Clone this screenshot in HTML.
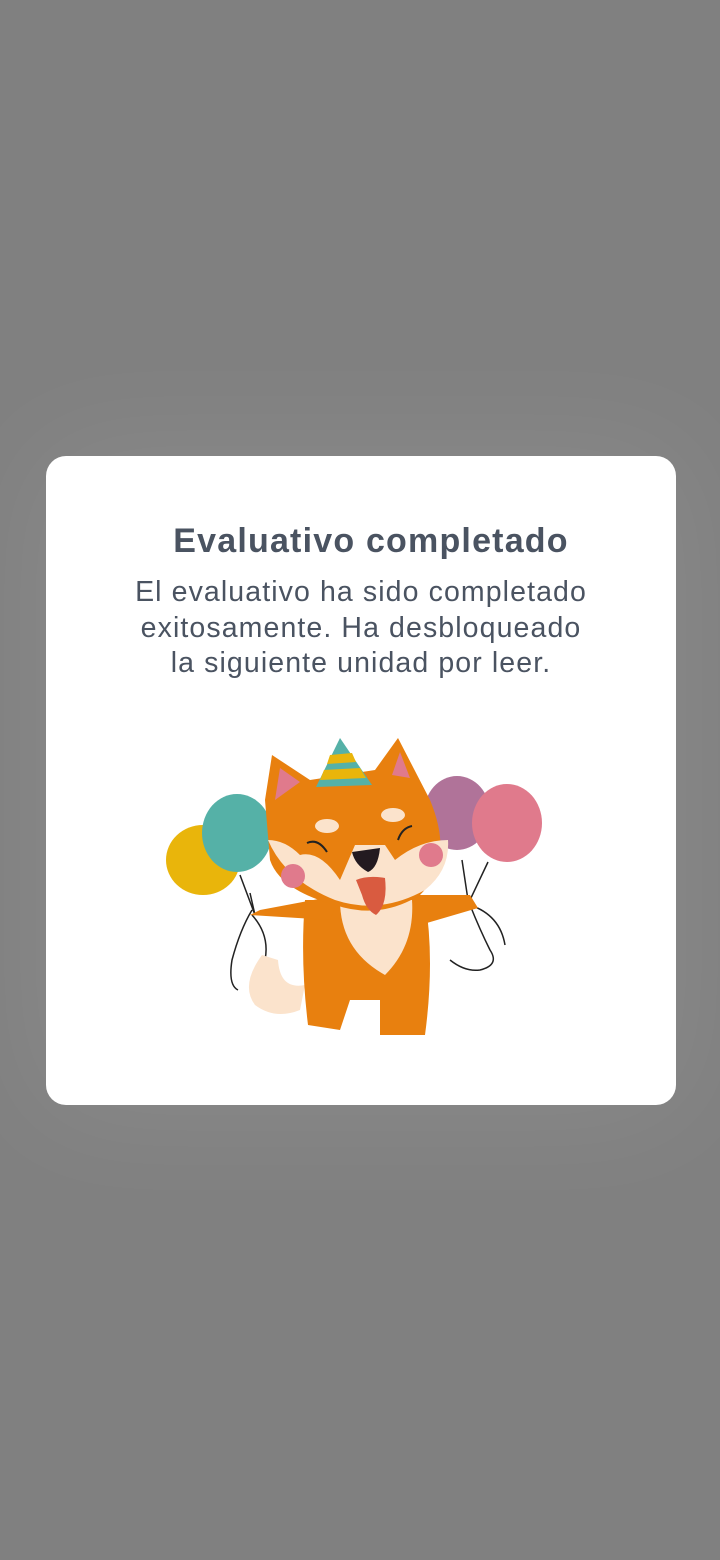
<!DOCTYPE html>
<html><head><meta charset="utf-8"><style>
html,body{margin:0;padding:0}
body{width:720px;height:1560px;background:#808080;position:relative;overflow:hidden;font-family:"Liberation Sans",sans-serif}
.card{position:absolute;left:46px;top:456px;width:630px;height:649px;background:#fff;border-radius:20px;box-shadow:0 0 120px 10px rgba(255,255,255,0.08)}
.t{position:absolute;left:0;width:720px;text-align:center;color:#4a5361;white-space:nowrap}
.h{top:522px;font-size:34px;font-weight:bold;letter-spacing:1.2px;padding-left:22px;box-sizing:border-box}
.p{top:575px;font-size:28.5px;line-height:35.5px;letter-spacing:1.1px;padding-left:2px;box-sizing:border-box}
svg{position:absolute;left:0;top:0}
</style></head><body>
<div class="card"></div>
<div class="t h">Evaluativo completado</div>
<div class="t p">El evaluativo ha sido completado<br>exitosamente. Ha desbloqueado<br>la siguiente unidad por leer.</div>
<svg width="720" height="1560" viewBox="0 0 720 1560">
<g fill="none" stroke="#222" stroke-width="1.5">
<path d="M252 910 Q240 930 232 960 Q228 985 238 990 M252 915 Q270 935 265 960 Q262 980 285 985"/>
<path d="M470 905 Q480 930 490 950 Q500 965 480 970 Q465 972 450 960 M470 905 Q500 915 505 945"/>
<path d="M250 893 L255 915 M240 875 L255 915 M462 860 L468 900 M488 862 L470 900"/>
</g>
<ellipse cx="203" cy="860" rx="37" ry="35" fill="#e9b50b"/>
<ellipse cx="237" cy="833" rx="35" ry="39" fill="#55b1a7"/>
<ellipse cx="457" cy="813" rx="33" ry="37" fill="#b07399"/>
<ellipse cx="507" cy="823" rx="35" ry="39" fill="#e07a8c"/>
<path d="M262 955 Q240 985 255 1005 Q275 1020 300 1010 L305 985 Q280 990 278 960 Z" fill="#fbe3cc"/>
<path d="M305 900 Q300 960 308 1025 L340 1030 L350 1000 L380 1000 L380 1035 L425 1035 Q435 960 425 900 Z" fill="#e8800f"/>
<path d="M250 915 L330 920 L340 895 L260 910 Z" fill="#e8800f"/>
<path d="M400 895 L470 895 L478 908 L420 925 Z" fill="#e8800f"/>
<path d="M340 900 Q340 950 385 975 Q415 945 412 900 Z" fill="#fbe3cc"/>
<path d="M265 800 L272 755 L310 780 L375 770 L398 738 L430 800 Q455 860 420 895 Q380 920 335 905 Q280 890 270 860 Z" fill="#e8800f"/>
<path d="M275 800 L280 768 L300 782 Z M392 775 L400 752 L410 778 Z" fill="#e07a8c"/>
<path d="M268 840 Q285 880 335 900 Q380 915 425 890 Q450 870 448 840 Q420 840 395 860 L385 845 L355 845 L340 880 Q320 850 300 855 Q285 840 268 840 Z" fill="#fbe3cc"/>
<ellipse cx="327" cy="826" rx="12" ry="7" fill="#fbe3cc"/>
<ellipse cx="393" cy="815" rx="12" ry="7" fill="#fbe3cc"/>
<circle cx="293" cy="876" r="12" fill="#e07a8c"/>
<circle cx="431" cy="855" r="12" fill="#e07a8c"/>
<path d="M352 852 L380 848 Q378 868 368 872 Q355 865 352 852 Z" fill="#231a20"/>
<path d="M356 880 Q368 875 385 878 Q388 905 376 915 Q366 910 362 895 Z" fill="#d95b40"/>
<g fill="none" stroke="#222" stroke-width="2"><path d="M307 843 Q318 838 327 852 M398 840 Q402 828 412 826"/></g>
<path d="M316 787 L340 738 L372 785 Z" fill="#55b1a7"/>
<path d="M324 770 L360 768 L366 778 L320 780 Z M330 755 L352 753 L356 762 L327 764 Z" fill="#e9b50b"/>
</svg>
</body></html>
